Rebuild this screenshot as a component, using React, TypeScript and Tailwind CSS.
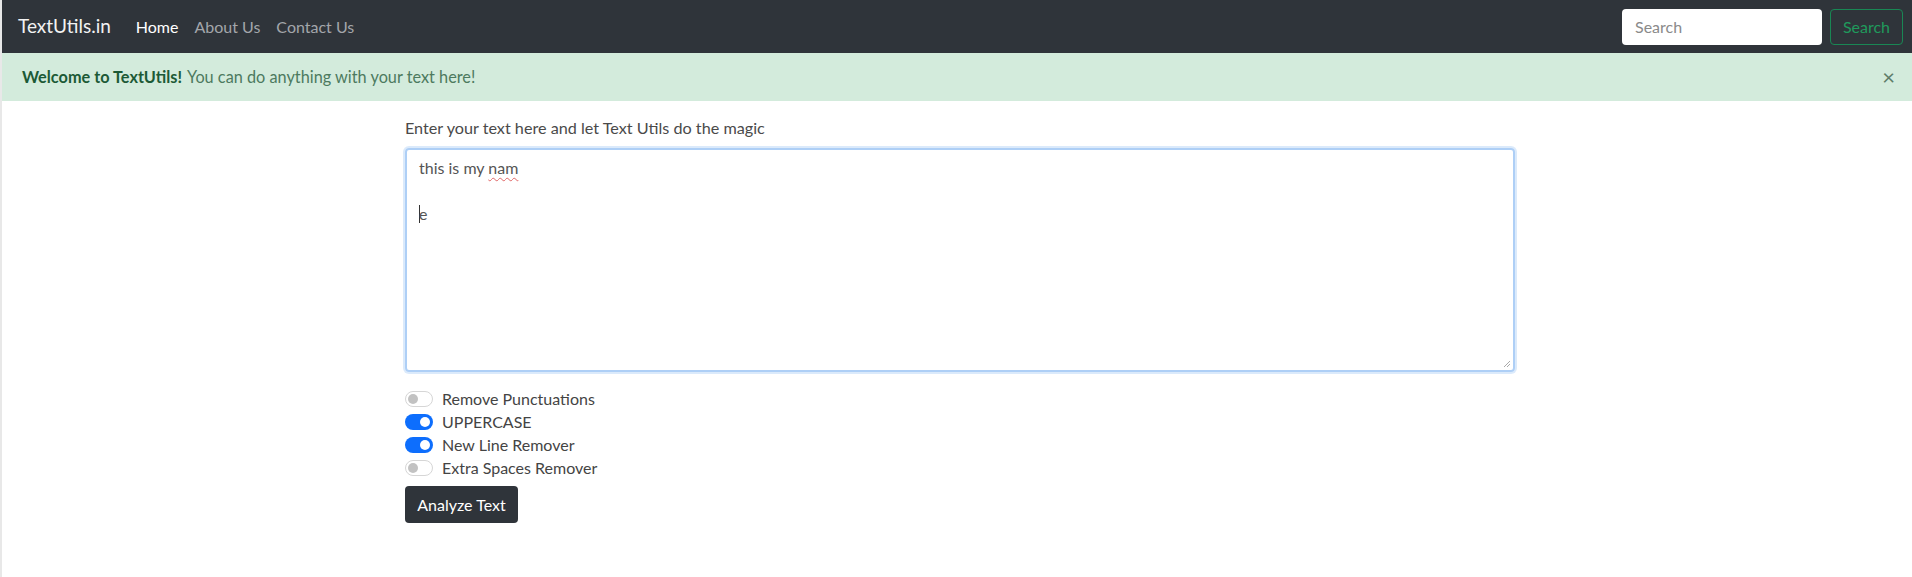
import React from "react";

const font = { fontFamily: "Lato, 'Noto Sans', sans-serif" };

function Toggle({ on, label }: { on: boolean; label: string }) {
  return (
    <div className="flex h-[23px] items-center gap-[9px]">
      {on ? (
        <span className="flex h-[16px] w-[28px] items-center justify-end rounded-full bg-[#0d6efd] px-[3px]">
          <span className="h-[10px] w-[10px] rounded-full bg-white" />
        </span>
      ) : (
        <span className="flex h-[16px] w-[28px] items-center rounded-full border border-[#d6d6d6] bg-white px-[2px]">
          <span className="h-[10px] w-[10px] rounded-full bg-[#c2c2c2]" />
        </span>
      )}
      <span className="text-[16px] text-[#444]">{label}</span>
    </div>
  );
}

export default function App() {
  return (
    <div className="min-h-[577px] w-full border-l-2 border-[#e8e8e8] bg-white" style={font}>
      {/* navbar */}
      <nav className="flex h-[53px] items-center bg-[#2f343a] pl-[16px] pr-[9px]">
        <span className="text-[19px] text-[#f2f2f2]">TextUtils.in</span>
        <div className="ml-[25px] flex items-center gap-[16px] text-[16px]">
          <span className="text-white">Home</span>
          <span className="text-[#a3a6aa]">About Us</span>
          <span className="text-[#a3a6aa]">Contact Us</span>
        </div>
        <div className="ml-auto flex items-center gap-[8px]">
          <div className="flex h-[36px] w-[200px] items-center rounded-[4px] bg-white pl-[13px] text-[16px] text-[#8a8a8a]">
            Search
          </div>
          <div className="flex h-[36px] w-[73px] items-center justify-center rounded-[4px] border border-[#198754] text-[16px] text-[#1f9a5c]">
            Search
          </div>
        </div>
      </nav>

      {/* alert */}
      <div className="flex h-[48px] items-center bg-[#d3ebdc] pl-[20px] pr-[17px] text-[16.3px] text-[#4d7a5f]">
        <span className="font-bold text-[#1c5a36]">Welcome to TextUtils!</span>
        <span className="ml-[5px]">You can do anything with your text here!</span>
        <span className="ml-auto text-[22px] leading-none text-[#5d7d69]">×</span>
      </div>

      {/* form */}
      <div className="ml-[403px] w-[1110px] pt-[17px]">
        <p className="text-[16.2px] leading-[20px] text-[#4a4a4a]">
          Enter your text here and let Text Utils do the magic
        </p>
        <div className="relative mt-[10px] h-[224px] rounded-[4px] border-2 border-[#aecff6] px-[12px] pt-[6px] text-[16px] leading-[23px] text-[#555] shadow-[0_0_0_2px_rgba(195,220,248,0.6)]">
          <div>
            this is my{" "}
            <span className="underline decoration-[#e06666] decoration-wavy decoration-1 underline-offset-[3px]">
              nam
            </span>
          </div>
          <div>&nbsp;</div>
          <div className="flex items-center">
            <span className="mr-[-1px] h-[18px] w-px bg-[#333]" />
            <span>e</span>
          </div>
          <svg className="absolute bottom-[2px] right-[2px]" width="9" height="9" viewBox="0 0 9 9">
            <path d="M8 2 L2 8 M8 5 L5 8" stroke="#aaa" strokeWidth="1" />
          </svg>
        </div>

        <div className="mt-[15px] flex flex-col">
          <Toggle on={false} label="Remove Punctuations" />
          <Toggle on={true} label="UPPERCASE" />
          <Toggle on={true} label="New Line Remover" />
          <Toggle on={false} label="Extra Spaces Remover" />
        </div>

        <button className="mt-[7px] h-[37px] w-[113px] rounded-[4px] bg-[#2f343a] text-[16px] text-white">
          Analyze Text
        </button>
      </div>
    </div>
  );
}
